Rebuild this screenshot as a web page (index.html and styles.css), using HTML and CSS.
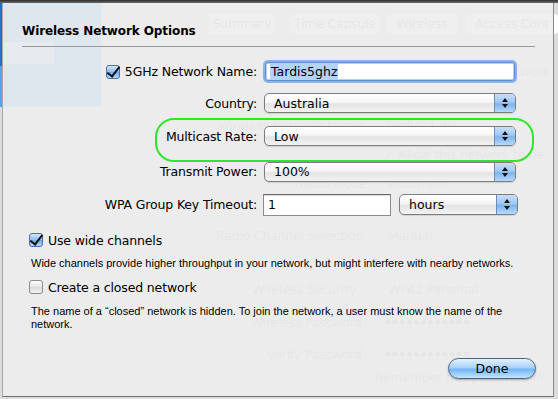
FILE: index.html
```html
<!DOCTYPE html>
<html>
<head>
<meta charset="utf-8">
<link rel="stylesheet" href="styles.css">
</head>
<body>
<div class="behind">
  <div class="side"></div>
  <div class="side-strip"></div>
  <div class="side-box"></div>
  <div class="ghost tab" style="left:209px;top:14px;width:66px">Summary</div>
  <div class="ghost tab" style="left:290px;top:14px;width:90px">Time Capsule</div>
  <div class="ghost tab" style="left:387px;top:14px;width:70px">Wireless</div>
  <div class="ghost tab" style="left:466px;top:14px;width:92px">Access Cont</div>
  <div class="ghost" style="left:520px;top:64px">work</div>
  <div class="ghost" style="left:218px;top:118px">Wireless Network Name</div>
  <div class="ghost" style="left:385px;top:118px">Tardis24ghz</div>
  <div class="ghost" style="left:384px;top:147px">✓ Allow this network to be</div>
  <div class="ghost" style="left:295px;top:176px">Radio Mode</div>
  <div class="ghost" style="left:389px;top:176px">Automatic</div>
  <div class="ghost" style="left:216px;top:228px">Radio Channel Selection</div>
  <div class="ghost" style="left:388px;top:228px">Manual</div>
  <div class="ghost" style="left:252px;top:282px">Wireless Security</div>
  <div class="ghost" style="left:388px;top:282px">WPA2 Personal</div>
  <div class="ghost" style="left:251px;top:315px">Wireless Password</div>
  <div class="ghost dots" style="left:385px;top:315px">●●●●●●●●●●●●</div>
  <div class="ghost" style="left:267px;top:347px">Verify Password</div>
  <div class="ghost dots" style="left:385px;top:347px">●●●●●●●●●●●●</div>
  <div class="ghost" style="left:375px;top:370px">Remember this password in</div>
</div>

<div class="topbar"></div>
<div class="sheet">
  <h1 class="title">Wireless Network Options</h1>
  <hr class="sep">

  <div class="form">
    <div class="row r1">
      <div class="lbl"><span class="cb on"></span>5GHz Network Name:</div>
      <div class="textfield focus"><span class="hl">Tardis5ghz</span></div>
    </div>
    <div class="row r2">
      <div class="lbl">Country:</div>
      <div class="popup full"><span class="val">Australia</span><span class="step"></span></div>
    </div>
    <div class="row r3 marked">
      <div class="lbl">Multicast Rate:</div>
      <div class="popup full"><span class="val">Low</span><span class="step"></span></div>
    </div>
    <div class="row r4">
      <div class="lbl">Transmit Power:</div>
      <div class="popup full"><span class="val">100%</span><span class="step"></span></div>
    </div>
    <div class="row r5">
      <div class="lbl">WPA Group Key Timeout:</div>
      <div class="textfield short">1</div>
      <div class="popup hours"><span class="val">hours</span><span class="step"></span></div>
    </div>
  </div>

  <div class="check c1"><span class="cb on"></span>Use wide channels</div>
  <p class="desc d1">Wide channels provide higher throughput in your network, but might interfere with nearby networks.</p>
  <div class="check c2"><span class="cb"></span>Create a closed network</div>
  <p class="desc d2">The name of a “closed” network is hidden. To join the network, a user must know the name of the network.</p>

  <div class="actions"><button class="done">Done</button></div>
</div>
</body>
</html>
```

FILE: styles.css
```css
* { box-sizing: border-box; }
html, body { margin: 0; padding: 0; }
body {
  width: 558px;
  height: 399px;
  overflow: hidden;
  background: #8e8e8e;
  font-family: "DejaVu Sans", "Liberation Sans", sans-serif;
  color: #000;
  position: relative;
}

/* window behind the sheet */
.behind {
  position: absolute;
  left: 0; top: 0;
  width: 558px; height: 399px;
  background: #dcdcdc;
}
.side { position: absolute; left: 0; top: 0; width: 101px; height: 107px; background: #50a4f0; }
.side-strip { position: absolute; left: 0; top: 0; width: 3px; height: 66px; background: #1f6fd6; }
.side-box { position: absolute; left: 2px; top: 42px; width: 52px; height: 22px; background: #a8cdf2; }
.ghost {
  position: absolute;
  font-size: 12.5px;
  color: #a4a4a4;
  white-space: nowrap;
  letter-spacing: -0.2px;
}
.ghost.tab {
  height: 20px;
  line-height: 20px;
  text-align: center;
  background: #ffffff;
  border-radius: 3px;
}
.ghost.dots { font-size: 7px; letter-spacing: 1px; line-height: 15px; }

.topbar {
  position: relative;
  height: 3px;
  background: linear-gradient(#2e2e2e, #6a6a6a);
}

/* sheet */
.sheet {
  position: relative;
  margin-left: 2px;
  width: 552px;
  height: 394px;
  background: rgba(237, 237, 237, 0.9);
  border-left: 1px solid #a9a9a9;
  border-right: 1px solid #8a8a8a;
  border-bottom: 1px solid #6e6e6e;
  padding-top: 20px;
}
.title {
  margin: 0 0 0 19px;
  font-size: 12px;
  font-weight: bold;
  line-height: 16px;
  letter-spacing: -0.1px;
}
.sep {
  margin: 7px 0 0 19px;
  width: 513px;
  height: 1px;
  border: 0;
  background: #9a9a9a;
}

.form { margin-top: 13px; }
.row {
  display: flex;
  align-items: center;
  font-size: 12.5px;
  position: relative;
}
.lbl {
  width: 255px;
  display: flex;
  justify-content: flex-end;
  align-items: center;
  padding-right: 1px;
  white-space: nowrap;
  letter-spacing: -0.15px;
}
.lbl .cb { margin-right: 5px; }
.r1 { height: 23px; }
.r2 { height: 20px; margin-top: 10px; }
.r3 { height: 20px; margin-top: 13px; }
.r4 { height: 21px; margin-top: 15px; }
.r5 { height: 23px; margin-top: 11px; }

.marked::after {
  content: "";
  position: absolute;
  left: 152px;
  top: -8px;
  width: 375px;
  height: 40px;
  border: 2px solid #2ee62a;
  border-radius: 19px;
  pointer-events: none;
}

.textfield {
  margin-left: 5px;
  height: 23px;
  background: #fff;
  border: 1px solid #8c8c8c;
  border-top-color: #6a6a6a;
  box-shadow: inset 0 1px 1px rgba(0,0,0,0.15);
  padding-left: 4px;
  display: flex;
  align-items: center;
  font-size: 12.5px;
}
.textfield.focus {
  border: 1px solid #5c8ed0;
  box-shadow: 0 0 0 2px #8cb2e4, inset 0 0 0 1px #b8d0ef;
  border-radius: 3px;
  margin-left: 7px;
  width: 250px;
  height: 19px;
}
.hl { background: #b3d3fb; padding: 1px; line-height: 15px; }
.textfield.short { width: 128px; height: 22px; margin-left: 5px; }

.popup {
  position: relative;
  height: 20px;
  border: 1px solid #7d7d7d;
  border-radius: 5px;
  background: linear-gradient(#ffffff 0%, #f6f6f6 45%, #e4e4e4 55%, #f3f3f3 100%);
  box-shadow: 0 1px 1px rgba(0,0,0,0.12);
  display: flex;
  align-items: center;
  overflow: hidden;
}
.popup.full { width: 252px; margin-left: 6px; }
.popup.hours { width: 119px; margin-left: 8px; height: 21px; }
.popup .val { flex: 1; padding-left: 9px; font-size: 12.5px; }
.step {
  width: 21px;
  align-self: stretch;
  border-left: 1px solid #6a8bc0;
  background: linear-gradient(#c6def9 0%, #a2c9f4 45%, #7fb4ef 55%, #b6d9fc 100%);
  position: relative;
}
.step::before, .step::after {
  content: "";
  position: absolute;
  left: 7px;
  border-left: 3px solid transparent;
  border-right: 3px solid transparent;
}
.step::before { top: 4px; border-bottom: 4px solid #111; }
.step::after { bottom: 4px; border-top: 4px solid #111; }

/* checkboxes */
.cb {
  display: inline-block;
  position: relative;
  width: 14px;
  height: 14px;
  border: 1px solid #8a8a8a;
  border-radius: 3px;
  background: linear-gradient(#fdfdfd, #e6e6e6 50%, #d9d9d9 51%, #f4f4f4);
  flex: none;
}
.cb.on {
  border-color: #4a6fa8;
  background: linear-gradient(#d7e8fb, #8fbdf0 50%, #6fa8ea 51%, #b5d8fd);
}
.cb.on::after {
  content: "";
  position: absolute;
  left: 3px;
  top: -2px;
  width: 5px;
  height: 11px;
  border-right: 2.5px solid #111;
  border-bottom: 2.5px solid #111;
  transform: rotate(38deg);
}

.check {
  display: flex;
  align-items: center;
  gap: 5px;
  margin-left: 26px;
  height: 14px;
  font-size: 12.5px;
  letter-spacing: -0.15px;
}
.c1 { margin-top: 17px; }
.c2 { margin-top: 10px; }
.desc {
  margin: 0 0 0 28px;
  font-family: "Liberation Sans", Arial, sans-serif;
  font-size: 11px;
  line-height: 13px;
  width: 495px;
}
.d1 { margin-top: 10px; }
.d2 { margin-top: 11px; width: 480px; }

.actions {
  display: flex;
  justify-content: flex-end;
  padding-right: 17px;
  margin-top: 27px;
}
.done {
  width: 88px;
  height: 21px;
  border: 1px solid #4d638d;
  border-radius: 11px;
  background: linear-gradient(#e4f2ff 0%, #a9d2f8 45%, #76b5f3 55%, #c3e6ff 100%);
  box-shadow: 0 1px 2px rgba(0,0,0,0.3);
  font-family: "DejaVu Sans", sans-serif;
  font-size: 12.5px;
  color: #000;
  padding: 0;
}
```
